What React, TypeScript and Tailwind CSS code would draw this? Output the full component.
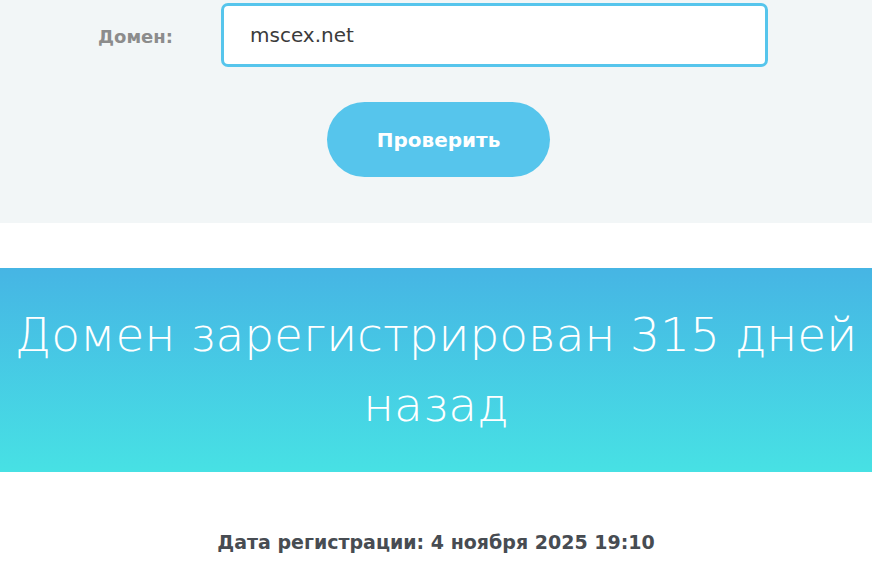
export default function App() {
  return (
    <div className="min-h-[583px] bg-white" style={{ fontFamily: '"DejaVu Sans", sans-serif' }}>
      <section className="h-[223px] bg-[#f2f6f7] pt-[3px]">
        <div className="flex items-center pl-[98px]">
          <label className="mt-[3px] w-[123px] text-[18px] font-bold text-[#8c8c8c]">Домен:</label>
          <div className="flex h-[64px] w-[547px] items-center rounded-[7px] border-[3px] border-[#56c5ec] bg-white pl-[26px]">
            <span className="text-[20px] text-[#3b3b3b]">mscex.net</span>
          </div>
        </div>
        <div className="mt-[35px] flex pl-[327px]">
          <button className="flex h-[75px] w-[223px] items-center justify-center rounded-full bg-[#56c5ec] text-[20px] font-bold text-white">
            Проверить
          </button>
        </div>
      </section>
      <div className="h-[45px]" />
      <section className="flex h-[204px] items-center justify-center bg-gradient-to-b from-[#46b5e4] to-[#47e1e4] px-2">
        <h1 className="text-center text-[47px] font-light leading-[70px] text-white">
          Домен зарегистрирован 315 дней назад
        </h1>
      </section>
      <div className="mt-[56px] text-center text-[19px] font-bold leading-[28px] text-[#474c52]">
        Дата регистрации: 4 ноября 2025 19:10
      </div>
    </div>
  );
}
